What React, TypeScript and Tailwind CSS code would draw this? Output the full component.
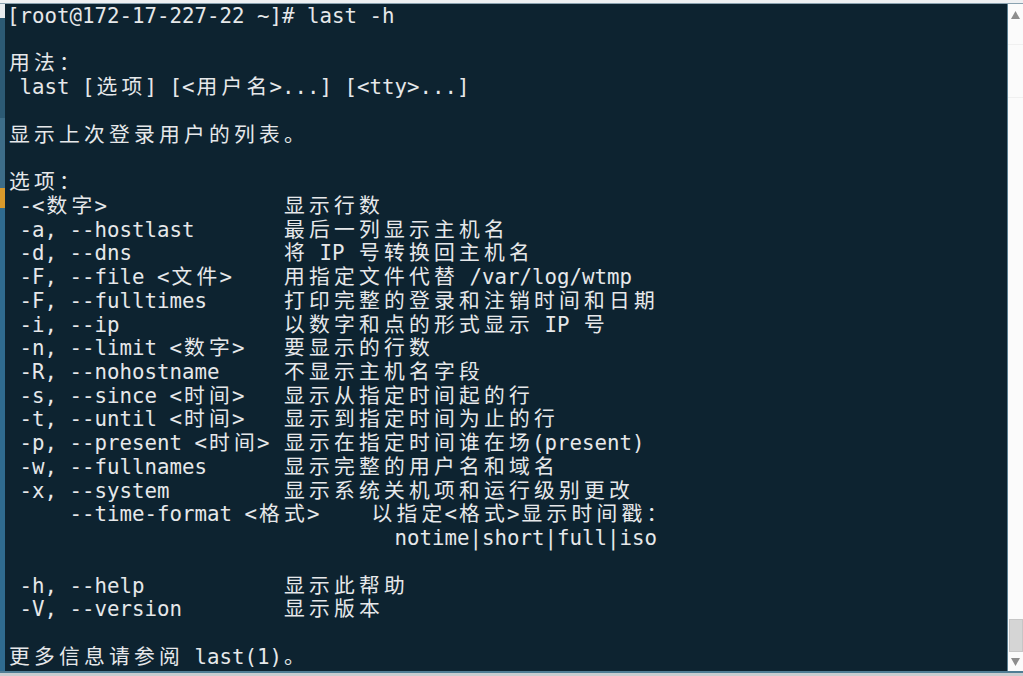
import React from "react";

const lines: string[] = [];
const pad = (s: string, col: number) => {
  let w = 0;
  for (const ch of s) w += isWide(ch) ? 2 : 1;
  return s + " ".repeat(Math.max(1, col - w));
};
function isWide(ch: string) {
  const c = ch.codePointAt(0) || 0;
  return (c >= 0x2e80 && c <= 0x9fff) || (c >= 0xff00 && c <= 0xff60) || (c >= 0x3000 && c <= 0x303f);
}
const opt = (l: string, r: string) => pad(l, 22) + r;

lines.push("[root@172-17-227-22 ~]# last -h");
lines.push("");
lines.push("用法：");
lines.push(" last [选项] [<用户名>...] [<tty>...]");
lines.push("");
lines.push("显示上次登录用户的列表。");
lines.push("");
lines.push("选项：");
lines.push(opt(" -<数字>", "显示行数"));
lines.push(opt(" -a, --hostlast", "最后一列显示主机名"));
lines.push(opt(" -d, --dns", "将 IP 号转换回主机名"));
lines.push(opt(" -F, --file <文件>", "用指定文件代替 /var/log/wtmp"));
lines.push(opt(" -F, --fulltimes", "打印完整的登录和注销时间和日期"));
lines.push(opt(" -i, --ip", "以数字和点的形式显示 IP 号"));
lines.push(opt(" -n, --limit <数字>", "要显示的行数"));
lines.push(opt(" -R, --nohostname", "不显示主机名字段"));
lines.push(opt(" -s, --since <时间>", "显示从指定时间起的行"));
lines.push(opt(" -t, --until <时间>", "显示到指定时间为止的行"));
lines.push(opt(" -p, --present <时间>", "显示在指定时间谁在场(present)"));
lines.push(opt(" -w, --fullnames", "显示完整的用户名和域名"));
lines.push(opt(" -x, --system", "显示系统关机项和运行级别更改"));
lines.push(pad("     --time-format <格式>", 29) + "以指定<格式>显示时间戳：");
lines.push(" ".repeat(31) + "notime|short|full|iso");
lines.push("");
lines.push(opt(" -h, --help", "显示此帮助"));
lines.push(opt(" -V, --version", "显示版本"));
lines.push("");
lines.push("更多信息请参阅 last(1)。");

function Line({ text }: { text: string }) {
  const chars = Array.from(text);
  return (
    <div className="flex h-[23.74px] items-center whitespace-pre">
      {chars.map((ch, i) =>
        isWide(ch) ? (
          <span key={i} className="inline-block w-[25px] shrink-0 text-center">
            {ch}
          </span>
        ) : (
          <span key={i} className="inline-block w-[12.5px] shrink-0">
            {ch}
          </span>
        )
      )}
    </div>
  );
}

export default function App() {
  return (
    <div className="flex h-[676px] w-[1023px] flex-col overflow-hidden bg-[#e9ecef]">
      <div className="h-[4px] w-full shrink-0 border-b border-[#8aa2b0] bg-[#eef0f2]" />
      <div className="flex h-[667px] w-full shrink-0">
        <div className="flex w-[5px] shrink-0 flex-col bg-[#35627c]">
          <div className="h-[14px] bg-[#e8ecef]" />
          <div className="h-[100px] bg-[#2c5a74]" />
          <div className="h-[70px] bg-[#3d6d88]" />
          <div className="h-[20px] bg-[#d99a2b]" />
          <div className="flex-1 bg-[#2f6b8f]" />
        </div>
        <div className="flex-1 border-r border-[#5b7f92] bg-[#0d2330] pl-[2px] pt-[1px] font-['DejaVu_Sans_Mono','Noto_Sans_CJK_SC',monospace] text-[20.76px] leading-[23.74px] text-[#e6e8ea]">
          {lines.map((l, i) => (
            <Line key={i} text={l} />
          ))}
        </div>
        <div className="flex w-[15px] shrink-0 flex-col items-center bg-[#fbfbfb]">
          <div className="flex h-[22px] w-full items-center justify-center">
            <svg width="9" height="8" viewBox="0 0 9 8">
              <path d="M4.5 0 L9 8 L0 8 Z" fill="#8d8d8d" />
            </svg>
          </div>
          <div className="h-px w-full bg-[#f0f0f0] mt-[18px]" />
          <div className="h-px w-full bg-[#f0f0f0] mt-[52px]" />
          <div className="mt-auto h-[33px] w-[14px] border border-[#c6c6c6] bg-[#d5d5d5]" />
          <div className="flex h-[19px] w-full items-center justify-center">
            <svg width="9" height="8" viewBox="0 0 9 8">
              <path d="M0 0 L9 0 L4.5 8 Z" fill="#8d8d8d" />
            </svg>
          </div>
        </div>
      </div>
      <div className="flex h-[5px] w-full shrink-0 flex-col">
        <div className="h-[2px] bg-[#4f7d94]" />
        <div className="flex-1 bg-[#c9cdd0]" />
      </div>
    </div>
  );
}
